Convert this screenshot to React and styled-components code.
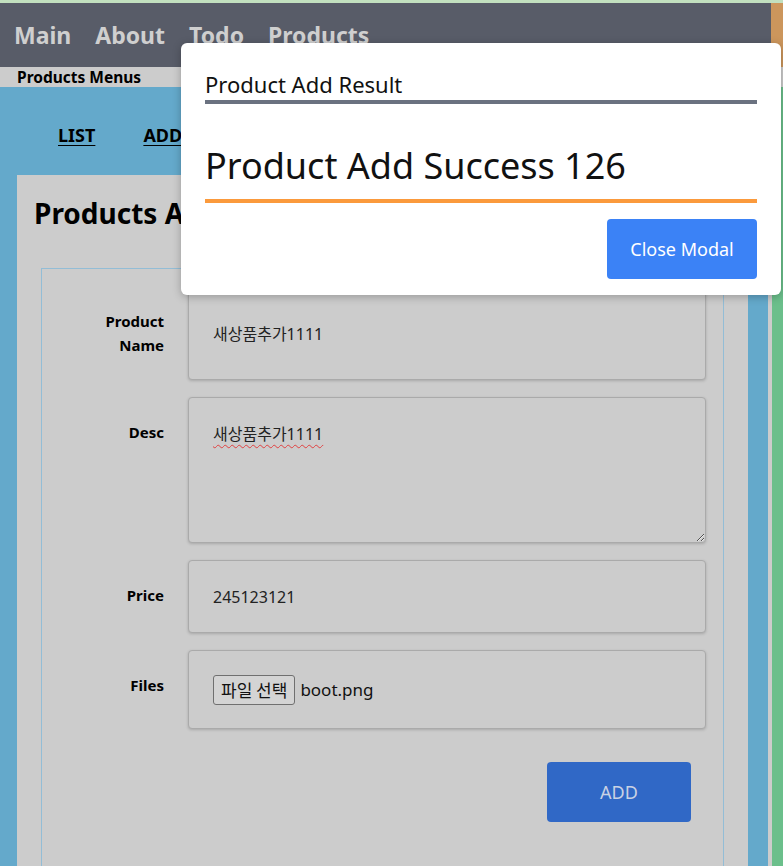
import React from 'react';
import styled, { createGlobalStyle } from 'styled-components';

const GlobalStyle = createGlobalStyle`
  html, body {
    margin: 0;
    padding: 0;
    background: #cccccc;
    font-family: "Noto Sans", "Noto Sans CJK KR", sans-serif;
    overflow: hidden;
  }
  * { box-sizing: border-box; }
`;

const TopLine = styled.div`
  height: 3px;
  background: #c2e0bf;
`;

const HeaderRow = styled.div`
  display: flex;
  height: 64px;
`;

const Nav = styled.nav`
  flex: 1;
  background: #585c68;
  display: flex;
  align-items: center;
  gap: 24px;
  padding: 0 0 0 14px;
`;

const NavItem = styled.a`
  color: #cfcfcf;
  font-size: 23px;
  font-weight: 700;
  text-decoration: none;
`;

const HeaderSide = styled.div`
  width: 12px;
  background: #cc965c;
`;

const SubBar = styled.div`
  height: 20px;
  background: #cccccc;
  padding-left: 17px;
  font-size: 15.5px;
  font-weight: 700;
  line-height: 20px;
  color: #000;
`;

const BodyRow = styled.div`
  display: flex;
  min-height: 800px;
`;

const Content = styled.main`
  flex: 1;
  background: #64a9cb;
  padding: 0 20px 0 17px;
`;

const Divider = styled.div`
  width: 4px;
  background: #cccccc;
`;

const SideBar = styled.aside`
  width: 11px;
  background: #6bbf8b;
`;

const SubNav = styled.div`
  display: flex;
  gap: 48px;
  padding: 36px 0 0 41px;
  height: 88px;
`;

const SubLink = styled.a`
  color: #000;
  font-size: 18px;
  font-weight: 700;
  text-decoration: underline;
  text-underline-offset: 3px;
`;

const Panel = styled.section`
  background: #cccccc;
  padding: 18px 24px 0;
  min-height: 700px;
`;

const Heading = styled.h1`
  margin: 0 0 0 -7px;
  font-size: 28px;
  font-weight: 700;
  color: #000;
  line-height: 40px;
`;

const FormBox = styled.div`
  margin-top: 35px;
  border: 1px solid #93bdd6;
  border-bottom: none;
  padding: 17px 17px 0 17px;
  min-height: 620px;
`;

const Row = styled.div`
  display: flex;
  gap: 24px;
  margin-bottom: 17px;
`;

const Label = styled.label`
  width: 105px;
  flex-shrink: 0;
  text-align: right;
  font-size: 15px;
  font-weight: 700;
  line-height: 24px;
  padding-top: 23px;
  color: #000;
`;

const fieldBase = `
  flex: 1;
  background: #cccccc;
  border: 1px solid #aaaaaa;
  border-radius: 4px;
  box-shadow: 0 1px 3px rgba(0, 0, 0, 0.18);
  padding: 0 24px;
  font-family: "Noto Sans", "Noto Sans CJK KR", sans-serif;
  font-size: 16px;
  color: #222;
  outline: none;
`;

const Input = styled.input`
  ${fieldBase}
  height: ${(p) => p.$h}px;
`;

const TextArea = styled.textarea`
  ${fieldBase}
  height: 146px;
  padding-top: 24px;
  resize: vertical;
  line-height: 24px;
  text-decoration: underline wavy #e04040;
  text-underline-offset: 4px;
  text-decoration-thickness: 1px;
`;

const FileBox = styled.div`
  ${fieldBase}
  height: 79px;
  display: flex;
  align-items: center;
  gap: 5px;
`;

const FileButton = styled.button`
  font-family: "Noto Sans CJK KR", sans-serif;
  font-size: 17px;
  background: #d4d4d4;
  border: 1px solid #707070;
  border-radius: 3px;
  padding: 0 7px;
  height: 30px;
  color: #111;
`;

const FileName = styled.span`
  font-size: 17px;
  color: #111;
`;

const Actions = styled.div`
  display: flex;
  justify-content: flex-end;
  padding: 16px 15px 0 0;
`;

const AddButton = styled.button`
  width: 144px;
  height: 60px;
  background: #3068c6;
  color: #c9d2e4;
  border: none;
  border-radius: 4px;
  font-family: "Noto Sans", sans-serif;
  font-size: 18px;
`;

const Modal = styled.div`
  position: absolute;
  left: 181px;
  top: 43px;
  width: 600px;
  background: #fff;
  border-radius: 6px;
  box-shadow: 0 2px 8px rgba(0, 0, 0, 0.25);
  padding: 26px 24px 16px;
`;

const ModalTitle = styled.div`
  font-size: 22px;
  line-height: 30px;
  color: #111;
  padding-bottom: 1px;
  border-bottom: 4px solid #6b7280;
`;

const ModalBody = styled.div`
  font-size: 36px;
  line-height: 44px;
  font-weight: 400;
  color: #111;
  padding: 40px 0 11px;
  border-bottom: 4px solid #fb9a3c;
`;

const ModalFooter = styled.div`
  display: flex;
  justify-content: flex-end;
  padding-top: 16px;
`;

const CloseButton = styled.button`
  width: 150px;
  height: 60px;
  background: #3b82f6;
  color: #fff;
  border: none;
  border-radius: 4px;
  font-family: "Noto Sans", sans-serif;
  font-size: 18px;
`;

export default function App() {
  return (
    <>
      <GlobalStyle />
      <TopLine />
      <HeaderRow>
        <Nav>
          <NavItem>Main</NavItem>
          <NavItem>About</NavItem>
          <NavItem>Todo</NavItem>
          <NavItem>Products</NavItem>
        </Nav>
        <HeaderSide />
      </HeaderRow>
      <SubBar>Products Menus</SubBar>
      <BodyRow>
        <Content>
          <SubNav>
            <SubLink>LIST</SubLink>
            <SubLink>ADD</SubLink>
          </SubNav>
          <Panel>
            <Heading>Products Add Page</Heading>
            <FormBox>
              <Row>
                <Label>Product Name</Label>
                <Input $h={94} defaultValue="새상품추가1111" />
              </Row>
              <Row>
                <Label>Desc</Label>
                <TextArea defaultValue="새상품추가1111" />
              </Row>
              <Row>
                <Label>Price</Label>
                <Input $h={73} defaultValue="245123121" />
              </Row>
              <Row>
                <Label>Files</Label>
                <FileBox>
                  <FileButton>파일 선택</FileButton>
                  <FileName>boot.png</FileName>
                </FileBox>
              </Row>
              <Actions>
                <AddButton>ADD</AddButton>
              </Actions>
            </FormBox>
          </Panel>
        </Content>
        <Divider />
        <SideBar />
      </BodyRow>
      <Modal>
        <ModalTitle>Product Add Result</ModalTitle>
        <ModalBody>Product Add Success 126</ModalBody>
        <ModalFooter>
          <CloseButton>Close Modal</CloseButton>
        </ModalFooter>
      </Modal>
    </>
  );
}
